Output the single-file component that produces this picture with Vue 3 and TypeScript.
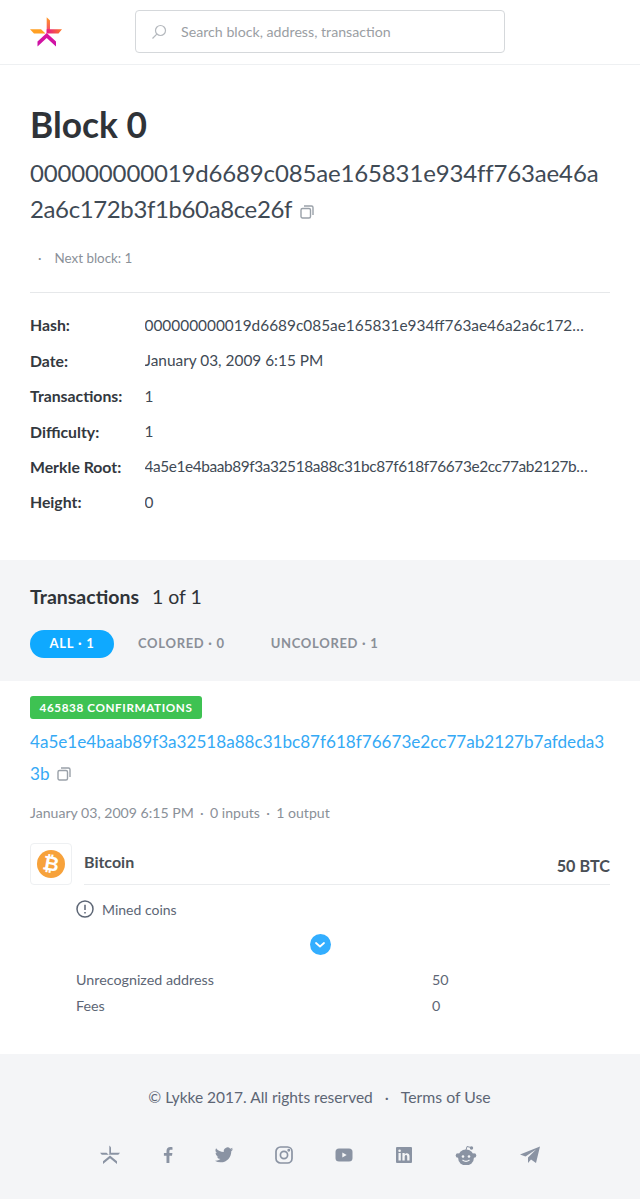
<script setup lang="ts">
const rows = [
  { label: 'Hash:', value: '000000000019d6689c085ae165831e934ff763ae46a2a6c172b3f1b60a8ce26f' },
  { label: 'Date:', value: 'January 03, 2009 6:15 PM' },
  { label: 'Transactions:', value: '1' },
  { label: 'Difficulty:', value: '1' },
  { label: 'Merkle Root:', value: '4a5e1e4baab89f3a32518a88c31bc87f618f76673e2cc77ab2127b7afdeda33b' },
  { label: 'Height:', value: '0' },
]
</script>

<template>
  <div class="page">
    <header class="header">
      <svg class="logo" width="32" height="32" viewBox="0 0 32 32">
        <defs>
          <linearGradient id="lg1" x1="0" y1="0" x2="0" y2="1"><stop offset="0" stop-color="#ff9a1f"/><stop offset="1" stop-color="#f5407a"/></linearGradient>
          <linearGradient id="lg2" x1="0" y1="0" x2="1" y2="0"><stop offset="0" stop-color="#e6168c"/><stop offset="1" stop-color="#ff7a22"/></linearGradient>
          <linearGradient id="lg3" x1="0" y1="0" x2="0" y2="1"><stop offset="0" stop-color="#e0189a"/><stop offset="1" stop-color="#c80fa8"/></linearGradient>
        </defs>
        <polygon points="16.700,1.300 20,4.500 20,14 16.700,17" fill="url(#lg1)"/>
        <polygon points="16.700,13.300 32,13.300 28.500,17.500 16.700,17.500" fill="url(#lg2)"/>
        <polygon points="0,13.300 11,13.300 15.500,17.500 4,17.500" fill="#ffa024"/>
        <polygon points="16.700,17 26,25.500 26,30.500 16.700,22 7.500,30.500 7.500,25.500" fill="url(#lg3)"/>
      </svg>
      <div class="search">
        <svg width="16" height="16" viewBox="0 0 16 16" fill="none" stroke="#b4b8bd" stroke-width="1.200"><circle cx="9.500" cy="6.500" r="5"/><path d="M5.800 10.200 1.500 14.500"/></svg>
        <span>Search block, address, transaction</span>
      </div>
    </header>

    <section class="summary">
      <h1>Block 0</h1>
      <div class="big-hash"><span class="first-line">000000000019d6689c085ae165831e934ff763ae46a</span><br>2a6c172b3f1b60a8ce26f <svg class="copy" width="14" height="14" viewBox="0 0 14 14" fill="none" stroke="#9aa1a9" stroke-width="1.400"><rect x="1" y="3.500" width="9.500" height="9.500" rx="1.500"/><path d="M4 1h7.500A1.500 1.500 0 0 1 13 2.500V10"/></svg></div>
      <div class="next"><span class="dot">·</span><span>Next block: 1</span></div>
      <dl class="props">
        <div v-for="r in rows" :key="r.label" class="prop">
          <dt>{{ r.label }}</dt>
          <dd>{{ r.value }}</dd>
        </div>
      </dl>
    </section>

    <section class="tx-head">
      <div class="tx-title"><strong>Transactions</strong><span>1 of 1</span></div>
      <div class="tabs">
        <span class="tab active">ALL · 1</span>
        <span class="tab">COLORED · 0</span>
        <span class="tab">UNCOLORED · 1</span>
      </div>
    </section>

    <section class="tx">
      <span class="badge">465838 CONFIRMATIONS</span>
      <div class="tx-hash">4a5e1e4baab89f3a32518a88c31bc87f618f76673e2cc77ab2127b7afdeda3<br>3b <svg class="copy" width="14" height="14" viewBox="0 0 14 14" fill="none" stroke="#9aa1a9" stroke-width="1.400"><rect x="1" y="3.500" width="9.500" height="9.500" rx="1.500"/><path d="M4 1h7.500A1.500 1.500 0 0 1 13 2.500V10"/></svg></div>
      <div class="tx-meta"><span>January 03, 2009 6:15 PM</span><i>·</i><span>0 inputs</span><i>·</i><span>1 output</span></div>
      <div class="asset">
        <div class="coin">
          <svg width="28" height="28" viewBox="0 0 28 28"><circle cx="14" cy="14" r="14" fill="#f7a23b"/><text x="14" y="20.500" text-anchor="middle" transform="rotate(10 14 14)" class="btc">₿</text></svg>
        </div>
        <div class="asset-line"><span class="asset-name">Bitcoin</span><span class="asset-amount">50 BTC</span></div>
      </div>
      <div class="mined">
        <svg width="18" height="18" viewBox="0 0 18 18" fill="none" stroke="#5d6675" stroke-width="1.500"><circle cx="9" cy="9" r="8"/><path d="M9 4.800v5.200M9 12v1.400"/></svg>
        <span>Mined coins</span>
      </div>
      <div class="toggle-wrap"><span class="toggle"><svg width="10" height="6" viewBox="0 0 10 6" fill="none" stroke="#fff" stroke-width="1.800" stroke-linecap="round" stroke-linejoin="round"><path d="M1 1l4 3.500L9 1"/></svg></span></div>
      <div class="out"><span>Unrecognized address</span><span>50</span></div>
      <div class="out"><span>Fees</span><span>0</span></div>
    </section>

    <footer class="footer">
      <div class="foot-links"><span>© Lykke 2017. All rights reserved</span><i>·</i><span>Terms of Use</span></div>
      <div class="social">
        <svg width="20" height="20" viewBox="0 0 20 20" fill="#8a93a3"><polygon points="9.300,0.500 11,2.300 11,9.500 9.300,10"/><polygon points="11,7.800 20,7.800 18.300,9.800 11,9.800"/><polygon points="0,7.800 6.500,7.800 8.800,9.800 1.800,9.800"/><polygon points="10,10.500 17,16.300 17,19 10,13.300 3,19 3,16.300"/></svg>
        <svg class="fb" width="20" height="20" viewBox="0 0 20 20"><path d="M11.400 18v-7.300h2.600l.4-2.800h-3V6.200c0-.8.300-1.400 1.500-1.400h1.600V2.200C14.200 2.100 13.300 2 12.400 2 10 2 8.500 3.400 8.500 5.900v2H5.900v2.800h2.600V18z" fill="#8a93a3"/></svg>
        <svg class="tw" width="20" height="20" viewBox="0 0 24 24"><path d="M23 5.100a9 9 0 0 1-2.600.7 4.500 4.500 0 0 0 2-2.500 9 9 0 0 1-2.900 1.100 4.500 4.500 0 0 0-7.700 4.100A12.800 12.800 0 0 1 2.500 3.800a4.500 4.500 0 0 0 1.400 6 4.500 4.500 0 0 1-2-.6v.1a4.500 4.500 0 0 0 3.600 4.400 4.500 4.500 0 0 1-2 .1 4.500 4.500 0 0 0 4.200 3.100A9 9 0 0 1 1 18.800a12.800 12.800 0 0 0 6.900 2c8.300 0 12.800-6.900 12.800-12.800v-.6A9 9 0 0 0 23 5.100z" fill="#8a93a3"/></svg>
        <svg width="20" height="20" viewBox="0 0 20 20" fill="none" stroke="#8a93a3" stroke-width="1.700"><rect x="2" y="2" width="16" height="16" rx="4.500"/><circle cx="10" cy="10" r="3.600"/><circle cx="14.800" cy="5.200" r=".6" fill="#8a93a3"/></svg>
        <svg width="20" height="20" viewBox="0 0 20 20"><rect x="1.500" y="3.500" width="17" height="13" rx="3.500" fill="#8a93a3"/><path d="M8.300 7.400v5.200l4.400-2.600z" fill="#f4f5f7"/></svg>
        <svg width="20" height="20" viewBox="0 0 20 20"><path fill-rule="evenodd" d="M3 2h14a1 1 0 0 1 1 1v14a1 1 0 0 1-1 1H3a1 1 0 0 1-1-1V3a1 1 0 0 1 1-1zM4.500 8v7.500h2.300V8zM5.600 4.400a1.300 1.300 0 1 0 0 2.600 1.300 1.300 0 0 0 0-2.600zM8.400 8v7.500h2.300v-3.900c0-2 2.500-2.200 2.500 0v3.900h2.300v-4.500c0-3.400-3.700-3.300-4.800-1.600V8z" fill="#8a93a3"/></svg>
        <svg class="rd" width="22" height="20" viewBox="0 0 22 20"><circle cx="11" cy="12.500" r="8" fill="#8a93a3"/><circle cx="3" cy="10.500" r="2.300" fill="#8a93a3"/><circle cx="19" cy="10.500" r="2.300" fill="#8a93a3"/><circle cx="16.500" cy="3" r="1.700" fill="#8a93a3"/><path d="M11 5l1-3.500 4 1" fill="none" stroke="#8a93a3" stroke-width="1"/><circle cx="8" cy="11.500" r="1.300" fill="#f4f5f7"/><circle cx="14" cy="11.500" r="1.300" fill="#f4f5f7"/><path d="M7.500 15c2 1.500 5 1.500 7 0" fill="none" stroke="#f4f5f7" stroke-width="1.100"/></svg>
        <svg class="tg" width="22" height="20" viewBox="0 0 22 20"><path d="M21 1.500 1 9.500l5.500 2L17 4.500 9 12.500v5.500l3-3.500 5 3.500z" fill="#8a93a3"/></svg>
      </div>
    </footer>
  </div>
</template>

<style>
html, body { margin: 0; background: #fff; }
</style>

<style scoped>
.page { width: 640px; height: 1199px; overflow: hidden; font-family: "Lato", "Liberation Sans", sans-serif; color: #3f4a55; display: flex; flex-direction: column; }
.header { height: 64px; border-bottom: 1px solid #eef0f2; display: flex; align-items: center; padding-left: 30px; box-sizing: content-box; }
.logo { flex: none; margin-right: 73px; margin-top: -1px; }
.search { width: 370px; height: 43px; box-sizing: border-box; border: 1px solid #d5d8db; border-radius: 4px; display: flex; align-items: center; padding-left: 15px; gap: 14px; font-size: 14.200px; color: #9a9ea3; margin-top: -1px; }
.search span { margin-top: -1px; }
.summary { padding: 37px 30px 0; height: 495px; box-sizing: border-box; }
h1 { margin: 0; font-size: 35.300px; line-height: 46px; font-weight: 700; color: #2f3338; }
.big-hash { margin-top: 7px; font-size: 24px; letter-spacing: -0.380px; line-height: 36px; color: #3f4a55; white-space: nowrap; }
.first-line { letter-spacing: -0.150px; }
.copy { margin-left: 3px; vertical-align: -1px; }
.next { margin-top: 21px; padding-left: 8px; display: flex; gap: 13px; font-size: 13.400px; color: #8a9098; line-height: 20px; }
.props { margin: 24px 0 0; border-top: 1px solid #e6e8ea; padding-top: 14.200px; }
.prop { display: flex; height: 35.400px; align-items: center; font-size: 15.400px; }
.prop:nth-child(5) dd { letter-spacing: -0.400px; }
dt { width: 114.500px; font-weight: 700; font-size: 15.800px; color: #33383e; flex: none; }
dd { margin: 0; width: 447px; overflow: hidden; white-space: nowrap; text-overflow: ellipsis; color: #3f4a55; }
.tx-head { background: #f4f5f7; height: 121px; padding: 24px 30px 0; box-sizing: border-box; }
.tx-title { font-size: 19.500px; line-height: 26px; color: #2f3338; display: flex; gap: 13px; }
.tx-title strong { font-weight: 700; }
.tabs { display: flex; margin-top: 20px; gap: 24px; align-items: center; }
.tab { font-size: 13px; font-weight: 700; letter-spacing: .7px; color: #8a8f98; line-height: 27px; padding-bottom: 1px; }
.tab:nth-child(3) { margin-left: 22px; }
.tab.active { background: #0fa9ff; color: #fff; border-radius: 14px; width: 84px; text-align: center; letter-spacing: .8px; }
.tx { padding: 15px 30px 0; height: 373px; box-sizing: border-box; }
.badge { display: block; width: 172px; height: 23px; line-height: 23px; text-align: center; background: #3ec252; color: #fff; font-size: 11.700px; font-weight: 700; letter-spacing: .6px; border-radius: 3px; }
.tx-hash { margin-top: 7px; font-size: 17.100px; line-height: 32px; color: #34a9f5; white-space: nowrap; }
.tx-meta { margin-top: 13px; font-size: 14.100px; color: #8a9098; line-height: 20px; display: flex; gap: 6.300px; }
.tx-meta i { font-style: normal; }
.asset { display: flex; margin-top: 20px; }
.coin { width: 42px; height: 42px; border: 1px solid #eef0f2; border-radius: 4px; box-sizing: border-box; display: flex; align-items: center; justify-content: center; flex: none; }
.btc { fill: #fff; font-size: 20px; font-weight: 700; font-family: "DejaVu Sans", sans-serif; }
.asset-line { flex: 1; margin-left: 12px; height: 42px; border-bottom: 1px solid #eaecee; position: relative; box-sizing: border-box; display: flex; justify-content: space-between; }
.asset-name { font-size: 16px; font-weight: 700; color: #4a4f56; line-height: 38px; }
.asset-amount { font-size: 16.200px; font-weight: 700; color: #4a4f56; line-height: 46px; }
.mined { margin: 15px 0 0 46px; display: flex; align-items: center; gap: 8px; font-size: 14px; color: #5d6675; }
.toggle-wrap { display: flex; justify-content: center; margin-top: 16px; }
.toggle { width: 21px; height: 21px; background: #33aeff; border-radius: 50%; display: flex; align-items: center; justify-content: center; }
.out { display: flex; margin: 0 0 0 46px; font-size: 14.300px; color: #5d6675; line-height: 26px; }
.toggle-wrap + .out { margin-top: 12px; }
.out span:first-child { width: 356px; }
.footer { background: #f4f5f7; flex: 1; display: flex; flex-direction: column; align-items: center; padding-top: 32px; }
.foot-links { font-size: 15.500px; color: #5d6675; display: flex; gap: 12px; line-height: 22px; margin-left: -1px; }
.foot-links span:last-child { font-size: 15.800px; }
.foot-links i { font-style: normal; }
.social { margin-top: 37px; display: flex; gap: 40px; align-items: center; }
.fb { margin-left: -2px; }
.tw { margin-left: -4px; }
.rd { margin-left: 1px; }
.tg { margin-left: 2px; }
</style>
